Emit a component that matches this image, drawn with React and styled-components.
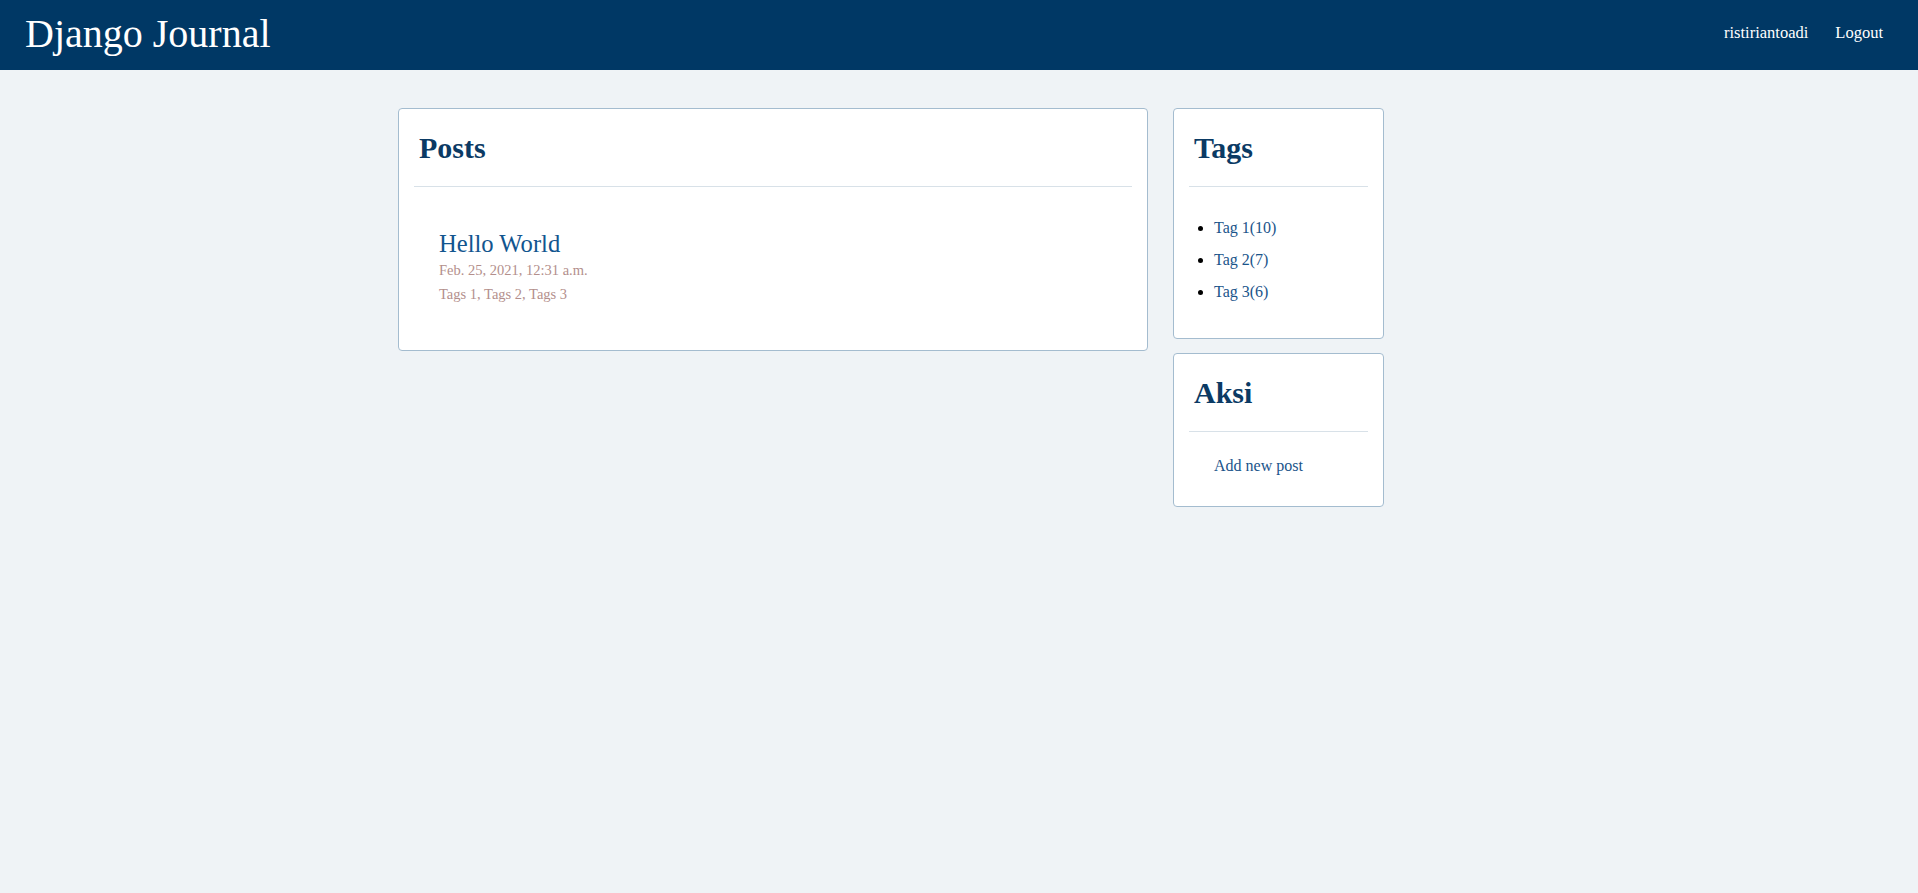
import React from "react";
import styled, { createGlobalStyle } from "styled-components";

const GlobalStyle = createGlobalStyle`
  html, body {
    margin: 0;
    padding: 0;
    background: #eff3f6;
    font-family: "Liberation Serif", "Times New Roman", serif;
  }
  * { box-sizing: border-box; }
`;

const Header = styled.header`
  height: 70px;
  background: #003865;
  display: flex;
  align-items: center;
  justify-content: space-between;
  padding: 0 35px 3px 25px;
`;

const Brand = styled.a`
  color: #ffffff;
  font-size: 40px;
  line-height: 46px;
  text-decoration: none;
`;

const Nav = styled.nav`
  display: flex;
  gap: 27px;
  margin-bottom: 1px;
`;

const NavLink = styled.a`
  color: #ffffff;
  font-size: 16.5px;
  line-height: 18px;
  text-decoration: none;
`;

const Container = styled.main`
  max-width: 1140px;
  margin: 0 auto;
  padding: 38px 9px 0;
  display: flex;
  align-items: flex-start;
  gap: 25px;
`;

const Column = styled.div`
  display: flex;
  flex-direction: column;
  gap: 14px;
  width: ${(p) => p.$width}px;
  flex: none;
`;

const Card = styled.section`
  background: #ffffff;
  border: 1px solid #a4bccf;
  border-radius: 4px;
  padding: 0 15px ${(p) => p.$bottom}px;
`;

const CardTitle = styled.h2`
  margin: 0;
  padding: 21px 5px 20px;
  font-size: 30px;
  line-height: 36px;
  font-weight: bold;
  color: #0b3a64;
  border-bottom: 1px solid #d8e1e8;
`;

const PostList = styled.div`
  padding: 43px 25px 0;
`;

const PostTitle = styled.a`
  display: block;
  font-size: 24.6px;
  line-height: 28px;
  color: #12558f;
  text-decoration: none;
`;

const PostMeta = styled.div`
  font-size: 14.5px;
  line-height: 24px;
  color: #b38f8c;
`;

const TagList = styled.ul`
  margin: 0;
  padding: 25px 0 0 25px;
  list-style: disc;
  color: #000;
`;

const TagItem = styled.li`
  font-size: 16px;
  line-height: 32px;
`;

const SideLink = styled.a`
  color: #1a548a;
  text-decoration: none;
`;

const Actions = styled.div`
  padding: 24px 0 0 25px;
  font-size: 16px;
  line-height: 20px;
`;

const tags = [
  { name: "Tag 1", count: 10 },
  { name: "Tag 2", count: 7 },
  { name: "Tag 3", count: 6 },
];

export default function App() {
  return (
    <>
      <GlobalStyle />
      <Header>
        <Brand href="#">Django Journal</Brand>
        <Nav>
          <NavLink href="#">ristiriantoadi</NavLink>
          <NavLink href="#">Logout</NavLink>
        </Nav>
      </Header>
      <Container>
        <Column $width={750}>
          <Card $bottom={44}>
            <CardTitle>Posts</CardTitle>
            <PostList>
              <PostTitle href="#">Hello World</PostTitle>
              <PostMeta>Feb. 25, 2021, 12:31 a.m.</PostMeta>
              <PostMeta>Tags 1, Tags 2, Tags 3</PostMeta>
            </PostList>
          </Card>
        </Column>
        <Column $width={211}>
          <Card $bottom={30}>
            <CardTitle>Tags</CardTitle>
            <TagList>
              {tags.map((t) => (
                <TagItem key={t.name}>
                  <SideLink href="#">
                    {t.name}({t.count})
                  </SideLink>
                </TagItem>
              ))}
            </TagList>
          </Card>
          <Card $bottom={30}>
            <CardTitle>Aksi</CardTitle>
            <Actions>
              <SideLink href="#">Add new post</SideLink>
            </Actions>
          </Card>
        </Column>
      </Container>
    </>
  );
}
